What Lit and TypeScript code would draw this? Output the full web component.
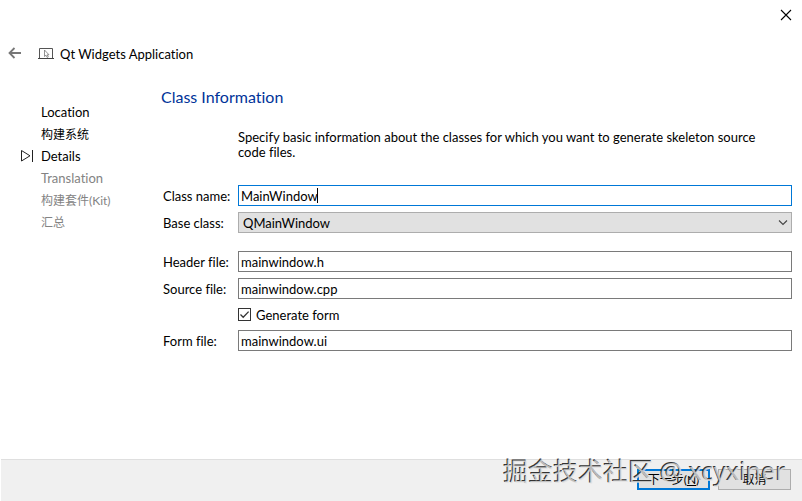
import { LitElement, html, css } from "lit";
import { customElement, state } from "lit/decorators.js";
import { classMap } from "lit/directives/class-map.js";

interface Step {
  label: string;
  status: "done" | "current" | "pending";
}

@customElement("app-root")
export class AppRoot extends LitElement {
  static styles = css`
    :host {
      display: flex;
      flex-direction: column;
      min-height: 100vh;
      box-sizing: border-box;
      background: #fff;
      color: #000;
      font: 13px/16px Lato, "Noto Sans CJK SC", sans-serif;
      font-variant-ligatures: none;
    }
    * {
      box-sizing: border-box;
    }
    svg {
      display: block;
    }
    button,
    input,
    select {
      font: inherit;
      font-variant-ligatures: none;
      color: inherit;
      margin: 0;
      border-radius: 0;
      outline: none;
    }
    .bar {
      display: flex;
      justify-content: flex-end;
      height: 30px;
      padding-right: 6px;
    }
    .icon-button {
      display: grid;
      place-items: center;
      border: 0;
      padding: 0;
      background: none;
      width: 20px;
      height: 30px;
    }
    .top {
      display: flex;
      align-items: center;
      height: 48px;
      padding-left: 5px;
    }
    .top .app-icon {
      margin: 0 6px 0 13px;
    }
    .title {
      margin: 0;
      font-size: 13px;
      font-weight: 400;
    }
    .body {
      flex: 1;
      display: grid;
      grid-template-columns: 141px 1fr;
      column-gap: 20px;
      padding: 8px 10px 0 0;
    }
    .steps {
      list-style: none;
      margin: 0;
      padding: 15px 0 0 20px;
    }
    .step {
      display: grid;
      grid-template-columns: 15px 1fr;
      column-gap: 6px;
      align-items: center;
      height: 22px;
    }
    .step .name {
      grid-column: 2;
    }
    .step .mark {
      grid-row: 1;
    }
    .pending {
      color: #838383;
    }
    .step .cjk {
      padding-top: 2px;
      font-size: 12px;
    }
    .heading {
      margin: 0;
      font-size: 16px;
      line-height: 21px;
      font-weight: 400;
      color: #003399;
    }
    .form {
      display: grid;
      grid-template-columns: 69px 1fr;
      gap: 6px;
      align-items: center;
      padding: 23px 0 20px 2px;
    }
    .hint {
      grid-column: 2;
      margin: 0 0 19px;
      padding-right: 12px;
      line-height: 15px;
    }
    .label {
      white-space: nowrap;
    }
    .field {
      position: relative;
      display: block;
    }
    .text,
    .select {
      display: block;
      width: 100%;
      height: 21px;
      border: 1px solid #7a7a7a;
      background: #fff;
      padding: 0 2px;
    }
    .text.active {
      border-color: #0078d7;
    }
    .caret {
      position: absolute;
      left: 79px;
      top: 3px;
      width: 1px;
      height: 15px;
      background: #000;
    }
    .select {
      appearance: none;
      background: #e1e1e1;
      border-color: #adadad;
      padding: 0 4px;
    }
    .chevron {
      position: absolute;
      right: 4px;
      top: 7px;
      pointer-events: none;
    }
    .group-start {
      margin-top: 12px;
    }
    .check-row {
      grid-column: 2;
      display: flex;
      align-items: center;
      gap: 5px;
      height: 19px;
    }
    .check {
      display: grid;
      width: 13px;
      height: 13px;
    }
    .check > * {
      grid-area: 1 / 1;
    }
    .check input {
      appearance: none;
      width: 13px;
      height: 13px;
      border: 1px solid #333;
      background: #fff;
    }
    .check svg {
      position: relative;
      pointer-events: none;
    }
    .footer {
      position: relative;
      display: flex;
      justify-content: flex-end;
      align-items: flex-start;
      gap: 8px;
      margin-left: 1px;
      padding: 9px 11px 11px;
      border-top: 1px solid #dfdfdf;
      background: #f0f0f0;
      font-size: 12px;
    }
    .push {
      width: 73px;
      height: 21px;
      padding: 0;
      border: 1px solid #adadad;
      background: #e1e1e1;
      line-height: 16px;
    }
    .push.default {
      border: 2px solid #0078d7;
    }
    .watermark {
      position: absolute;
      right: 16px;
      bottom: 12px;
      font-family: "Noto Sans", "Noto Sans CJK SC", sans-serif;
      font-size: 25px;
      line-height: 36px;
      white-space: nowrap;
      color: rgba(225, 225, 225, 0.8);
      text-shadow: -1px -1px 0 #333;
      pointer-events: none;
    }
  `;

  @state() private steps: Step[] = [
    { label: "Location", status: "done" },
    { label: "构建系统", status: "done" },
    { label: "Details", status: "current" },
    { label: "Translation", status: "pending" },
    { label: "构建套件(Kit)", status: "pending" },
    { label: "汇总", status: "pending" },
  ];

  private renderStep(step: Step) {
    return html`<li class=${classMap({ step: true, pending: step.status === "pending" })}>
      ${step.status === "current"
        ? html`<svg class="mark" width="15" height="14" viewBox="0 0 15 14" fill="none" stroke="#222">
            <path d="M1.500 1.500v10.500L10 6.800z M12.500 1v12" />
          </svg>`
        : null}
      <span class=${classMap({ name: true, cjk: /[^\x00-\x7f]/.test(step.label) })}>${step.label}</span>
    </li>`;
  }

  private renderText(id: string, label: string, value: string, start = false) {
    return html`<label class=${classMap({ label: true, "group-start": start })} for=${id}>${label}</label>
      <input class=${classMap({ text: true, "group-start": start })} id=${id} type="text" .value=${value} />`;
  }

  render() {
    return html`
      <div class="bar">
        <button class="icon-button" aria-label="Close">
          <svg width="12" height="12" viewBox="0 0 12 12" stroke="#000" stroke-width="1.1">
            <path d="M1 1l10 10M11 1L1 11" />
          </svg>
        </button>
      </div>
      <header class="top">
        <button class="icon-button" aria-label="Back">
          <svg width="14" height="14" viewBox="0 0 14 14" fill="none" stroke="#777" stroke-width="1.8">
            <path d="M13 6H2M6.500 1L1.500 6l5 5" />
          </svg>
        </button>
        <svg class="app-icon" width="16" height="14" viewBox="0 0 16 14" fill="none">
          <path d="M1.500 11V1.500h13V11" stroke="#555" />
          <path d="M0 11.500h16" stroke="#444" />
          <path d="M6.500 3v6.500l1.500-1.300 1.200 2.300 1.100-.6-1.100-2.100h1.800z" stroke="#777" stroke-width=".8" fill="#fff" />
        </svg>
        <h1 class="title">Qt Widgets Application</h1>
      </header>
      <div class="body">
        <ol class="steps">
          ${this.steps.map((s) => this.renderStep(s))}
        </ol>
        <main>
          <h2 class="heading">Class Information</h2>
          <form class="form">
            <p class="hint">
              Specify basic information about the classes for which you want to generate skeleton source code files.
            </p>
            <label class="label" for="class-name">Class name:</label>
            <span class="field">
              <input class="text active" id="class-name" type="text" .value=${"MainWindow"} />
              <span class="caret"></span>
            </span>
            <label class="label" for="base-class">Base class:</label>
            <span class="field">
              <select class="select" id="base-class">
                <option>QMainWindow</option>
              </select>
              <svg class="chevron" width="10" height="7" viewBox="0 0 10 7" fill="none" stroke="#444" stroke-width="1.1">
                <path d="M1 1.500l4 4 4-4" />
              </svg>
            </span>
            ${this.renderText("header-file", "Header file:", "mainwindow.h", true)}
            ${this.renderText("source-file", "Source file:", "mainwindow.cpp")}
            <div class="check-row">
              <span class="check">
                <input id="generate-form" type="checkbox" checked />
                <svg width="13" height="13" viewBox="0 0 13 13" fill="none" stroke="#333" stroke-width="1.3">
                  <path d="M2.500 6.500l2.700 2.700L10.600 3.600" />
                </svg>
              </span>
              <label for="generate-form">Generate form</label>
            </div>
            ${this.renderText("form-file", "Form file:", "mainwindow.ui")}
          </form>
        </main>
      </div>
      <footer class="footer">
        <button class="push default">下一步(<u>N</u>)</button>
        <button class="push">取消</button>
        <span class="watermark">掘金技术社区 @ xcyxiner</span>
      </footer>
    `;
  }
}
